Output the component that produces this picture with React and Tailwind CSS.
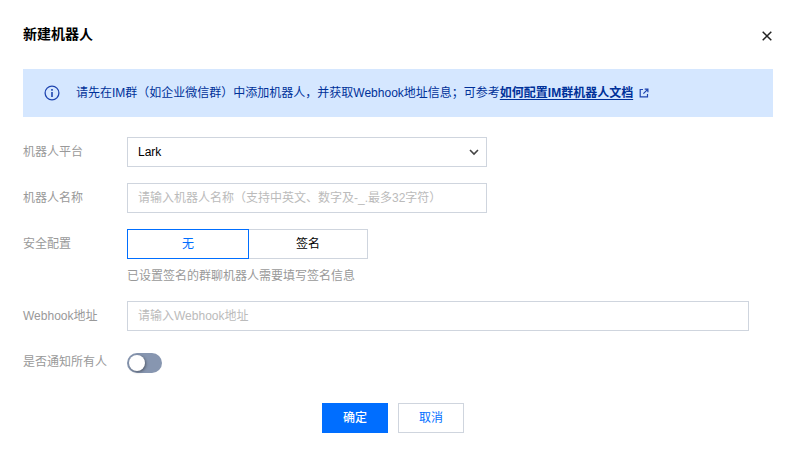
import { useState } from 'react';

function InfoIcon() {
  return (
    <svg width="16" height="16" viewBox="0 0 16 16" fill="none" className="shrink-0" aria-hidden="true">
      <circle cx="8" cy="8" r="6.9" stroke="#1f45b0" strokeWidth="1.3" />
      <path d="M8 4v1.7M8 7v5" stroke="#1f45b0" strokeWidth="1.6" />
    </svg>
  );
}

function ExternalIcon() {
  return (
    <svg width="10" height="10" viewBox="0 0 10 10" fill="none" stroke="#1f45b0" strokeWidth="1.2" aria-hidden="true">
      <path d="M4 1.5H1.2v7.3h7.3V6" />
      <path d="M5.7 1.1h3.2v3.2M8.7 1.3L4.4 5.6" />
    </svg>
  );
}

function CloseIcon() {
  return (
    <svg width="10" height="10" viewBox="0 0 10 10" fill="none" stroke="#222" strokeWidth="1.5" aria-hidden="true">
      <path d="M.7.7l8.6 8.6M9.3.7L.7 9.3" />
    </svg>
  );
}

function Row({ label, htmlFor, children }) {
  return (
    <div className="flex items-start">
      <label htmlFor={htmlFor} className="w-26 shrink-0 leading-[30px] text-[#999]">
        {label}
      </label>
      <div className="min-w-0 flex-1">{children}</div>
    </div>
  );
}

const field =
  'block h-[30px] w-full border border-[#cfd5de] bg-white px-2.5 text-black outline-none placeholder:text-[#bbb] placeholder:opacity-100';

export default function App() {
  const [sign, setSign] = useState(false);
  const on = 'relative border-[#006eff] text-[#006eff]';
  const off = 'border-[#cfd5de] text-black';

  return (
    <div
      role="dialog"
      aria-labelledby="title"
      className="bg-white pt-6 pr-[21px] pb-5 pl-[23px] font-['Liberation_Sans','Noto_Sans_CJK_SC',sans-serif] text-[12px]"
    >
      <header className="flex h-[45px] items-start justify-between">
        <h1 id="title" className="text-[14px] leading-5 font-bold text-black">
          新建机器人
        </h1>
        <button type="button" aria-label="关闭" className="pt-[7px] pr-px">
          <CloseIcon />
        </button>
      </header>

      <div className="flex min-h-12 items-center gap-4 bg-[#d5e7ff] px-[21px] text-[#003199]">
        <InfoIcon />
        <p className="leading-5">
          请先在IM群（如企业微信群）中添加机器人，并获取Webhook地址信息；可参考
          <a href="#doc" className="inline-flex items-center gap-[6px] font-bold">
            <span className="underline underline-offset-2">如何配置IM群机器人文档</span>
            <ExternalIcon />
          </a>
        </p>
      </div>

      <form className="mt-5" onSubmit={(e) => e.preventDefault()}>
        <div className="flex flex-col gap-4">
          <Row label="机器人平台" htmlFor="platform">
            <div className="relative max-w-[360px]">
              <select id="platform" className={`${field} appearance-none`}>
                <option>Lark</option>
              </select>
              <svg
                width="10"
                height="7"
                viewBox="0 0 10 7"
                fill="none"
                stroke="#444"
                strokeWidth="1.6"
                className="pointer-events-none absolute top-3 right-2"
                aria-hidden="true"
              >
                <path d="M1 1l4 4 4-4" />
              </svg>
            </div>
          </Row>

          <Row label="机器人名称" htmlFor="name">
            <div className="max-w-[360px]">
              <input id="name" className={field} placeholder="请输入机器人名称（支持中英文、数字及-_.最多32字符）" />
            </div>
          </Row>

          <Row label="安全配置" htmlFor="none">
            <div className="flex">
              <button
                id="none"
                type="button"
                aria-pressed={!sign}
                onClick={() => setSign(false)}
                className={`h-[30px] w-[122px] border ${sign ? off : on}`}
              >
                无
              </button>
              <button
                type="button"
                aria-pressed={sign}
                onClick={() => setSign(true)}
                className={`-ml-px h-[30px] w-[120px] border ${sign ? on : off}`}
              >
                签名
              </button>
            </div>
            <p className="mt-2 leading-[18px] text-[#999]">已设置签名的群聊机器人需要填写签名信息</p>
          </Row>

          <Row label="Webhook地址" htmlFor="webhook">
            <div className="pr-6">
              <input id="webhook" className={field} placeholder="请输入Webhook地址" />
            </div>
          </Row>

          <Row label="是否通知所有人" htmlFor="notify">
            <div className="flex pt-[6px]">
              <input
                id="notify"
                type="checkbox"
                role="switch"
                className="h-5 w-[35px] appearance-none rounded-full bg-[#8796b0] p-0.5 before:block before:size-4 before:rounded-full before:bg-white before:shadow-[1px_1px_3px_rgba(0,0,0,0.4)] checked:bg-[#006eff] checked:before:ml-[15px]"
              />
            </div>
          </Row>
        </div>

        <div className="mt-[26px] flex justify-center gap-2.5 pr-2.5">
          <button type="submit" className="h-[30px] w-[66px] bg-[#006eff] font-medium text-white">
            确定
          </button>
          <button type="button" className="h-[30px] w-[66px] border border-[#cfd5de] text-[#006eff]">
            取消
          </button>
        </div>
      </form>
    </div>
  );
}
